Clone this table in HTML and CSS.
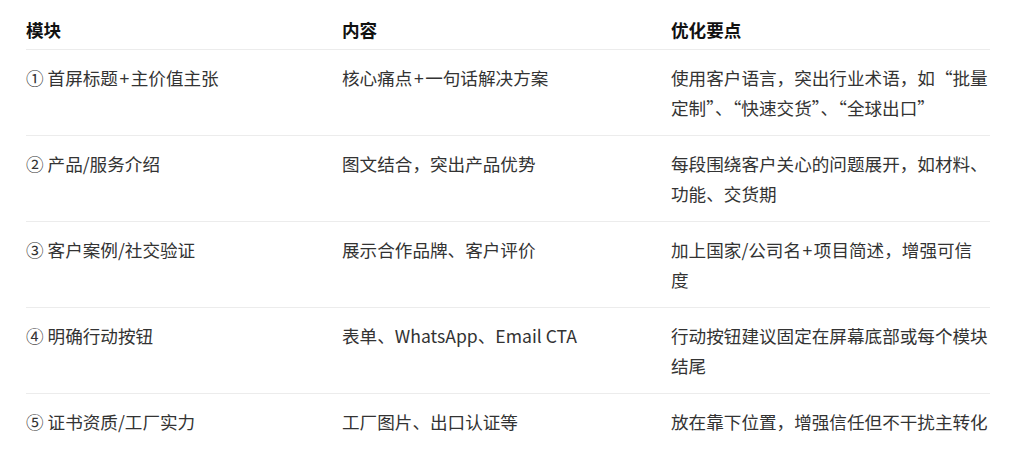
FILE: index.html
```html
<!DOCTYPE html>
<html lang="zh-CN">
<head>
<meta charset="utf-8">
<title>模块</title>
<link rel="stylesheet" href="styles.css">
</head>
<body>
<div class="table">
  <div class="row head">
    <div class="cell">模块</div>
    <div class="cell">内容</div>
    <div class="cell">优化要点</div>
  </div>
  <div class="row">
    <div class="cell">① 首屏标题<span class="sym">+</span>主价值主张</div>
    <div class="cell">核心痛点<span class="sym">+</span>一句话解决方案</div>
    <div class="cell">使用客户语言，突出行业术语，如“批量定制”、“快速交货”、“全球出口”</div>
  </div>
  <div class="row">
    <div class="cell">② 产品/服务介绍</div>
    <div class="cell">图文结合，突出产品优势</div>
    <div class="cell">每段围绕客户关心的问题展开，如材料、功能、交货期</div>
  </div>
  <div class="row">
    <div class="cell">③ 客户案例/社交验证</div>
    <div class="cell">展示合作品牌、客户评价</div>
    <div class="cell">加上国家/公司名<span class="sym">+</span>项目简述，增强可信度</div>
  </div>
  <div class="row">
    <div class="cell">④ 明确行动按钮</div>
    <div class="cell">表单、WhatsApp、Email CTA</div>
    <div class="cell">行动按钮建议固定在屏幕底部或每个模块结尾</div>
  </div>
  <div class="row last">
    <div class="cell">⑤ 证书资质/工厂实力</div>
    <div class="cell">工厂图片、出口认证等</div>
    <div class="cell">放在靠下位置，增强信任但不干扰主转化</div>
  </div>
</div>
</body>
</html>
```

FILE: styles.css
```css
html, body {
  margin: 0;
  padding: 0;
  background: #ffffff;
}
body {
  font-family: "Noto Sans CJK SC", "Noto Sans", sans-serif;
  font-size: 17.6px;
  color: #333333;
}
.table {
  width: 964px;
  margin-left: 26px;
}
.row {
  display: grid;
  grid-template-columns: 316px 329px 318px;
  border-bottom: 1px solid #ececec;
  padding: 13px 0 12px;
  line-height: 30px;
}
.row.head {
  padding: 15px 0 4px;
  font-weight: 700;
  color: #111111;
}
.row.last {
  border-bottom: none;
}
.sym {
  padding: 0 1.5px;
}
```
